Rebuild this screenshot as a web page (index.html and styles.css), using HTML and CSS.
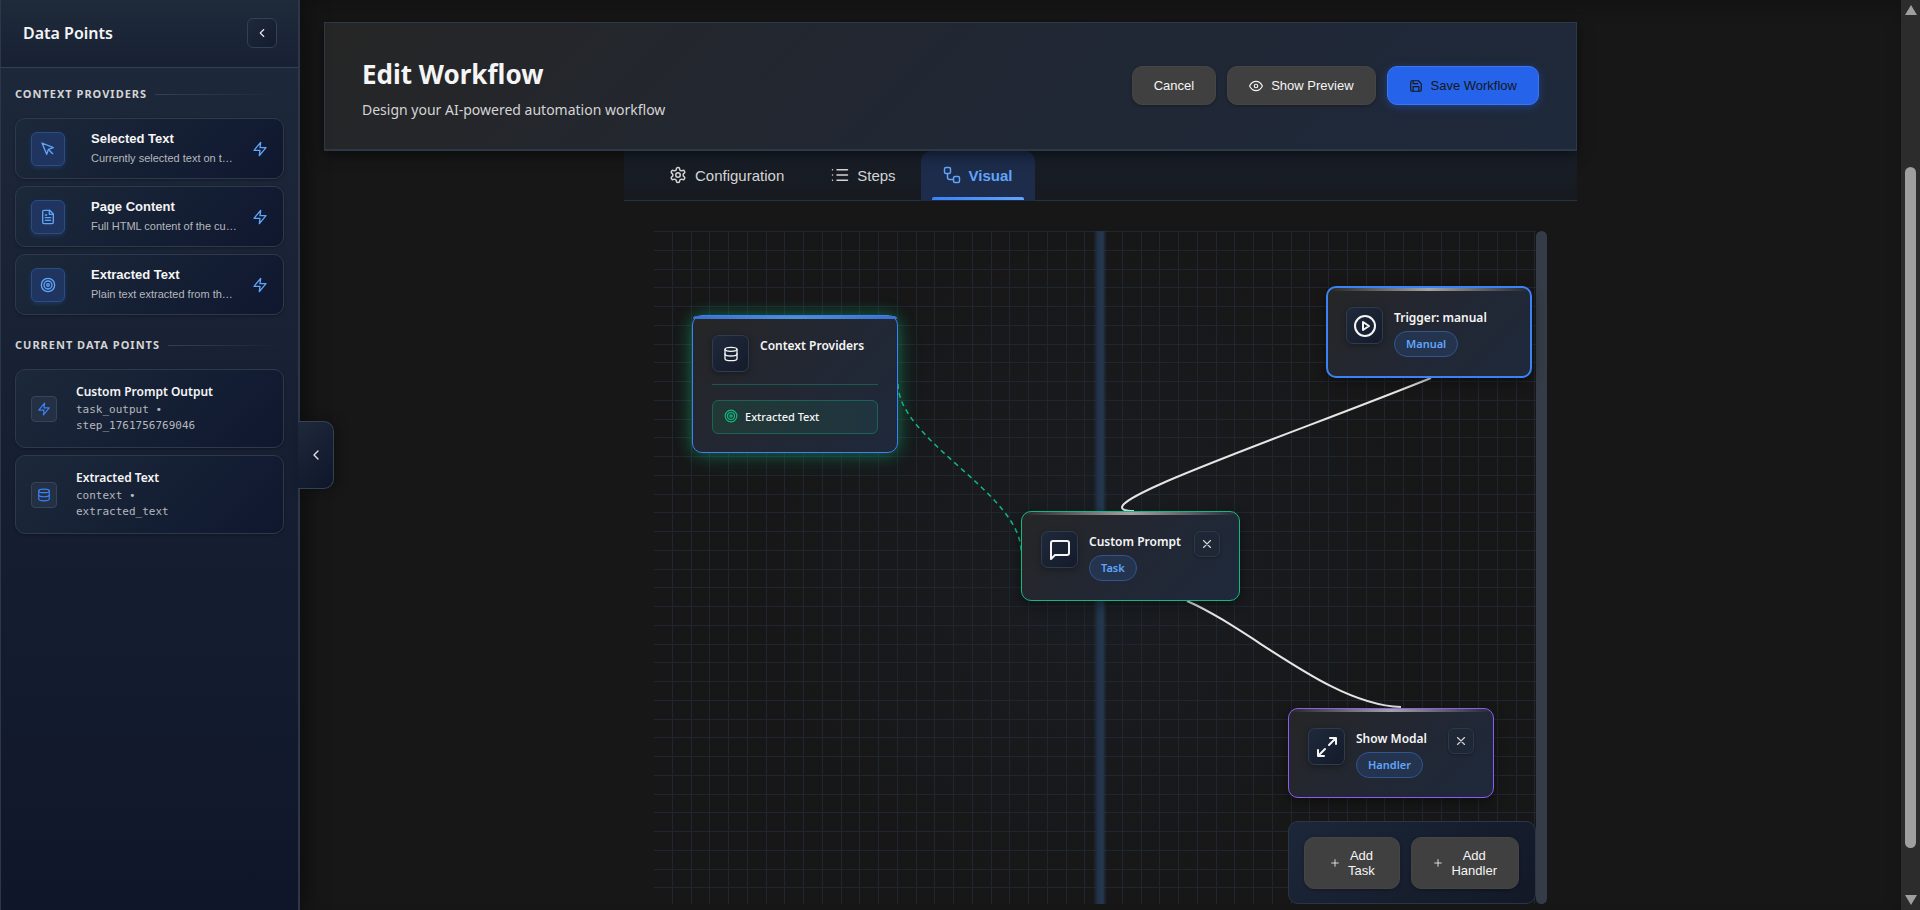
FILE: index.html
```
<!DOCTYPE html>
<html lang="en">
<head>
    <meta charset="UTF-8">
    <meta name="viewport" content="width=device-width, initial-scale=1.0">
    <title>Edit Workflow</title>
    <link rel="stylesheet" href="styles.css">
</head>
<body>
    <!-- Shared icon shapes -->
    <svg class="sprite" aria-hidden="true">
        <symbol id="i-left" viewBox="0 0 24 24"><path d="m15 18-6-6 6-6"/></symbol>
        <symbol id="i-zap" viewBox="0 0 24 24"><path d="M13 2 3 14h9l-1 8 10-12h-9l1-8z"/></symbol>
        <symbol id="i-cursor" viewBox="0 0 24 24"><path d="m3 3 7.07 16.97 2.51-7.39 7.39-2.51L3 3z"/><path d="m13 13 6 6"/></symbol>
        <symbol id="i-file" viewBox="0 0 24 24"><path d="M14.5 2H6a2 2 0 0 0-2 2v16a2 2 0 0 0 2 2h12a2 2 0 0 0 2-2V7.500z"/><path d="M14 2v6h6M16 13H8M16 17H8M10 9H8"/></symbol>
        <symbol id="i-target" viewBox="0 0 24 24"><circle cx="12" cy="12" r="10"/><circle cx="12" cy="12" r="6"/><circle cx="12" cy="12" r="2"/></symbol>
        <symbol id="i-db" viewBox="0 0 24 24"><ellipse cx="12" cy="5" rx="9" ry="3"/><path d="M21 12c0 1.660-4 3-9 3s-9-1.340-9-3"/><path d="M3 5v14c0 1.660 4 3 9 3s9-1.340 9-3V5"/></symbol>
        <symbol id="i-eye" viewBox="0 0 24 24"><path d="M1 12s4-8 11-8 11 8 11 8-4 8-11 8S1 12 1 12z"/><circle cx="12" cy="12" r="3"/></symbol>
        <symbol id="i-save" viewBox="0 0 24 24"><path d="M19 21H5a2 2 0 0 1-2-2V5a2 2 0 0 1 2-2h11l5 5v11a2 2 0 0 1-2 2z"/><path d="M17 21v-8H7v8M7 3v5h8"/></symbol>
        <symbol id="i-gear" viewBox="0 0 24 24"><path d="M12.220 2h-.44a2 2 0 0 0-2 2v.18a2 2 0 0 1-1 1.730l-.43.25a2 2 0 0 1-2 0l-.15-.08a2 2 0 0 0-2.730.73l-.22.38a2 2 0 0 0 .73 2.730l.15.1a2 2 0 0 1 1 1.720v.51a2 2 0 0 1-1 1.740l-.15.09a2 2 0 0 0-.73 2.730l.22.38a2 2 0 0 0 2.730.73l.15-.08a2 2 0 0 1 2 0l.43.25a2 2 0 0 1 1 1.730V20a2 2 0 0 0 2 2h.44a2 2 0 0 0 2-2v-.18a2 2 0 0 1 1-1.730l.43-.25a2 2 0 0 1 2 0l.15.08a2 2 0 0 0 2.730-.73l.22-.39a2 2 0 0 0-.73-2.730l-.15-.08a2 2 0 0 1-1-1.740v-.5a2 2 0 0 1 1-1.740l.15-.09a2 2 0 0 0 .73-2.730l-.22-.38a2 2 0 0 0-2.730-.73l-.15.08a2 2 0 0 1-2 0l-.43-.25a2 2 0 0 1-1-1.730V4a2 2 0 0 0-2-2z"/><circle cx="12" cy="12" r="3"/></symbol>
        <symbol id="i-list" viewBox="0 0 24 24"><path d="M8 5h14M8 12h14M8 19h14M2 5h.01M2 12h.01M2 19h.01"/></symbol>
        <symbol id="i-flow" viewBox="0 0 24 24"><rect x="2" y="2" width="8" height="8" rx="2"/><rect x="14" y="14" width="8" height="8" rx="2"/><path d="M6 10v5a3 3 0 0 0 3 3h5"/></symbol>
        <symbol id="i-play" viewBox="0 0 24 24"><circle cx="12" cy="12" r="10"/><path d="m10 8 6 4-6 4V8z"/></symbol>
        <symbol id="i-chat" viewBox="0 0 24 24"><path d="M21 15a2 2 0 0 1-2 2H7l-4 4V5a2 2 0 0 1 2-2h14a2 2 0 0 1 2 2z"/></symbol>
        <symbol id="i-expand" viewBox="0 0 24 24"><path d="M15 3h6v6M9 21H3v-6M21 3l-7 7M3 21l7-7"/></symbol>
        <symbol id="i-x" viewBox="0 0 24 24"><path d="M18 6 6 18M6 6l12 12"/></symbol>
        <symbol id="i-plus" viewBox="0 0 24 24"><path d="M12 4v16M4 12h16"/></symbol>
    </svg>

    <aside class="sidebar">
        <div class="sidebar-header">
            <h2>Data Points</h2>
            <button class="square-button" aria-label="Collapse panel"><svg class="icon s14"><use href="#i-left"/></svg></button>
        </div>
        <div class="sidebar-body">
            <section class="group">
                <h3 class="group-title">Context Providers</h3>
                <div class="point">
                    <span class="point-icon"><svg class="icon s16"><use href="#i-cursor"/></svg></span>
                    <div class="point-text">
                        <h4>Selected Text</h4>
                        <p>Currently selected text on the page</p>
                    </div>
                    <svg class="icon s16 bolt"><use href="#i-zap"/></svg>
                </div>
                <div class="point">
                    <span class="point-icon"><svg class="icon s16"><use href="#i-file"/></svg></span>
                    <div class="point-text">
                        <h4>Page Content</h4>
                        <p>Full HTML content of the current page</p>
                    </div>
                    <svg class="icon s16 bolt"><use href="#i-zap"/></svg>
                </div>
                <div class="point">
                    <span class="point-icon"><svg class="icon s16"><use href="#i-target"/></svg></span>
                    <div class="point-text">
                        <h4>Extracted Text</h4>
                        <p>Plain text extracted from the page</p>
                    </div>
                    <svg class="icon s16 bolt"><use href="#i-zap"/></svg>
                </div>
            </section>
            <section class="group">
                <h3 class="group-title">Current Data Points</h3>
                <div class="point output">
                    <span class="point-icon"><svg class="icon s14"><use href="#i-zap"/></svg></span>
                    <div class="point-text">
                        <h4>Custom Prompt Output</h4>
                        <p>task_output • step_1761756769046</p>
                    </div>
                </div>
                <div class="point output">
                    <span class="point-icon"><svg class="icon s14"><use href="#i-db"/></svg></span>
                    <div class="point-text">
                        <h4>Extracted Text</h4>
                        <p>context • extracted_text</p>
                    </div>
                </div>
            </section>
        </div>
        <button class="sidebar-tab" aria-label="Toggle sidebar"><svg class="icon s16"><use href="#i-left"/></svg></button>
    </aside>

    <main class="main">
        <header class="page-header">
            <div class="heading">
                <h1>Edit Workflow</h1>
                <p>Design your AI-powered automation workflow</p>
            </div>
            <div class="actions">
                <button class="button">Cancel</button>
                <button class="button"><svg class="icon s14"><use href="#i-eye"/></svg>Show Preview</button>
                <button class="button primary"><svg class="icon s14"><use href="#i-save"/></svg>Save Workflow</button>
            </div>
        </header>

        <div class="editor">
            <nav class="tabs">
                <button class="tab"><svg class="icon s18"><use href="#i-gear"/></svg>Configuration</button>
                <button class="tab"><svg class="icon s18"><use href="#i-list"/></svg>Steps</button>
                <button class="tab active"><svg class="icon s18"><use href="#i-flow"/></svg>Visual</button>
            </nav>

            <div class="canvas-wrap">
                <div class="canvas">
                    <svg class="grid">
                        <defs>
                            <pattern id="cells" width="75" height="75" patternUnits="userSpaceOnUse">
                                <path d="M18.500 0v75M37.500 0v75M55.500 0v75M74.500 0v75M0 .5h75M0 19.500h75M0 38.500h75M0 56.500h75"/>
                            </pattern>
                        </defs>
                        <rect width="100%" height="100%" fill="url(#cells)"/>
                    </svg>
                    <div class="center-line"></div>
                    <svg class="edges">
                        <path class="edge data" d="M244 153C244 209 367 263 367 320"/>
                        <path class="edge" d="M777 147C636 204 414 279 480 280"/>
                        <path class="edge" d="M533 370C596 397 676 474 747 476"/>
                    </svg>

                    <div class="node context">
                        <div class="node-head">
                            <span class="node-icon"><svg class="icon s16"><use href="#i-db"/></svg></span>
                            <div class="node-text"><h4>Context Providers</h4></div>
                        </div>
                        <div class="node-items">
                            <div class="node-item"><svg class="icon s14"><use href="#i-target"/></svg>Extracted Text</div>
                        </div>
                    </div>

                    <div class="node trigger">
                        <div class="node-head">
                            <span class="node-icon"><svg class="icon s24"><use href="#i-play"/></svg></span>
                            <div class="node-text"><h4>Trigger: manual</h4><span class="badge">Manual</span></div>
                        </div>
                    </div>

                    <div class="node task">
                        <div class="node-head">
                            <span class="node-icon"><svg class="icon s24"><use href="#i-chat"/></svg></span>
                            <div class="node-text"><h4>Custom Prompt</h4><span class="badge">Task</span></div>
                            <button class="node-close" aria-label="Remove task"><svg class="icon s14"><use href="#i-x"/></svg></button>
                        </div>
                    </div>

                    <div class="node handler">
                        <div class="node-head">
                            <span class="node-icon"><svg class="icon s24"><use href="#i-expand"/></svg></span>
                            <div class="node-text"><h4>Show Modal</h4><span class="badge">Handler</span></div>
                            <button class="node-close" aria-label="Remove handler"><svg class="icon s14"><use href="#i-x"/></svg></button>
                        </div>
                    </div>

                    <div class="toolbar">
                        <button class="button"><svg class="icon s10"><use href="#i-plus"/></svg><span>Add<br>Task</span></button>
                        <button class="button"><svg class="icon s10"><use href="#i-plus"/></svg><span>Add<br>Handler</span></button>
                    </div>
                </div>
                <div class="canvas-scroll"></div>
            </div>
        </div>
    </main>

    <div class="page-scroll">
        <span class="arrow up"></span>
        <span class="thumb"></span>
        <span class="arrow down"></span>
    </div>
</body>
</html>
```

FILE: styles.css
```
* {
    padding: 0;
    margin: 0;
    box-sizing: border-box;
}
body {
    display: flex;
    height: 100vh;
    overflow: hidden;
    background: #171717;
    color: #f5f5f5;
    font-family: "Noto Sans", sans-serif;
}
button {
    font-family: "Liberation Sans", Arial, sans-serif;
    cursor: pointer;
}
.sprite {
    position: absolute;
    width: 0;
    height: 0;
}

/* Icons */
.icon {
    flex: none;
    overflow: visible;
    fill: none;
    stroke: currentColor;
    stroke-width: 2;
    stroke-linecap: round;
    stroke-linejoin: round;
}
.s10 { width: 10px; height: 10px; }
.s14 { width: 14px; height: 14px; }
.s16 { width: 16px; height: 16px; }
.s18 { width: 18px; height: 18px; }
.s24 { width: 24px; height: 24px; }

/* Sidebar */
.sidebar {
    position: relative;
    z-index: 2;
    flex: none;
    width: 300px;
    border: 1px solid #2c3849;
    border-width: 0 2px 0 1px;
    background: linear-gradient(180deg, #1e293b 0%, #0f1629 100%);
    box-shadow: 4px 0 24px rgba(0,0,0,0.4);
}
.sidebar-header {
    display: flex;
    align-items: center;
    justify-content: space-between;
    height: 68px;
    padding: 0 21px 2px 22px;
    border-bottom: 1px solid #334155;
    background: linear-gradient(180deg, #1f2a3b, #172133);
}
.sidebar-header h2 {
    font-size: 16px;
    line-height: 24px;
    font-weight: 600;
}
.square-button {
    display: flex;
    align-items: center;
    justify-content: center;
    width: 30px;
    height: 30px;
    border: 1px solid #334155;
    border-radius: 6px;
    background: linear-gradient(135deg, #1e293b, #141c2f);
    color: #e5e5e5;
}
.sidebar-body {
    padding: 16px 14px;
}
.group {
    display: flex;
    flex-direction: column;
    gap: 7px;
    margin-bottom: 20px;
}
.group-title {
    display: flex;
    align-items: center;
    gap: 8px;
    margin-bottom: 7px;
    color: #d4d4d4;
    font-size: 11px;
    line-height: 20px;
    font-weight: 700;
    letter-spacing: 1px;
    text-transform: uppercase;
}
.group-title::after {
    content: "";
    flex: 1;
    height: 1px;
    background: linear-gradient(90deg, #334155, transparent);
}
.point {
    display: flex;
    align-items: center;
    height: 61px;
    padding: 0 15px;
    border: 1px solid #2e3a4b;
    border-radius: 10px;
    background: linear-gradient(135deg, #1c293a, #0f172f);
    box-shadow: 0 1px 3px rgba(0,0,0,0.3);
}
.point-icon {
    display: flex;
    align-items: center;
    justify-content: center;
    flex: none;
    width: 34px;
    height: 34px;
    border: 1px solid #2b4d86;
    border-radius: 6px;
    background: #1f355f;
    box-shadow: 0 2px 4px rgba(59,130,246,0.2);
    color: #60a5fa;
}
.point-text {
    flex: 1;
    min-width: 0;
    margin: 0 14px 0 26px;
    padding-bottom: 2px;
}
.point-text h4 {
    font: bold 13px/20px "Liberation Sans", Arial, sans-serif;
}
.point-text p {
    overflow: hidden;
    white-space: nowrap;
    text-overflow: ellipsis;
    color: #b5b8bd;
    font: 11px/18px "Liberation Sans", Arial, sans-serif;
}
.bolt {
    color: #60a5fa;
}
.output {
    height: 79px;
}
.output .point-icon {
    width: 26px;
    height: 26px;
    border-color: #36445a;
    border-radius: 4px;
    background: #243044;
    box-shadow: none;
    color: #3b82f6;
}
.output .point-text {
    margin: 0 40px 0 19px;
    padding-bottom: 2px;
}
.output h4 {
    font: 600 12px/20px "Noto Sans", sans-serif;
    white-space: nowrap;
}
.output p {
    white-space: normal;
    font: 11px/16px "DejaVu Sans Mono", monospace;
}
.sidebar-tab {
    position: absolute;
    top: 50%;
    left: 100%;
    width: 36px;
    height: 68px;
    margin-top: -34px;
    padding: 2px 0 0;
    border: 1px solid #334155;
    border-left: 0;
    border-radius: 0 10px 10px 0;
    background: linear-gradient(135deg, #1e293b, #0f1629);
    box-shadow: 4px 0 12px rgba(0,0,0,0.3);
    color: #e5e5e5;
}

/* Page header */
.main {
    flex: 1;
    display: flex;
    flex-direction: column;
    min-width: 0;
    padding: 22px 324px 6px 24px;
    box-shadow: inset 0 8px 16px rgba(0,0,0,0.2);
}
.page-header {
    position: relative;
    z-index: 1;
    display: flex;
    align-items: center;
    justify-content: space-between;
    padding: 26px 37px 27px;
    border: 1px solid #2e3947;
    border-bottom-width: 2px;
    background: linear-gradient(135deg, #262626, #212733 50%, #1e293b);
    box-shadow: 0 4px 12px rgba(0,0,0,0.5);
}
.heading {
    padding-top: 5px;
}
.heading h1 {
    font-size: 26px;
    line-height: 40px;
    font-weight: 700;
}
.heading p {
    margin-top: 4px;
    color: #d4d4d4;
    font-size: 14px;
    line-height: 24px;
}
.actions {
    display: flex;
    gap: 11px;
}
.button {
    display: flex;
    align-items: center;
    justify-content: center;
    gap: 8px;
    padding: 0 21px;
    height: 39px;
    border: 1px solid #454545;
    border-radius: 10px;
    background: #404040;
    box-shadow: 0 1px 3px rgba(0,0,0,0.3);
    color: #f5f5f5;
    font-size: 13px;
}
.button.primary {
    border-color: #3b76f6;
    background: #2563eb;
    box-shadow: 0 2px 8px rgba(37,99,235,0.4);
    color: #171717;
}

/* Tabs */
.editor {
    flex: 1;
    display: flex;
    flex-direction: column;
    margin-left: 300px;
}
.tabs {
    display: flex;
    gap: 3px;
    height: 50px;
    padding: 0 23px;
    border-bottom: 1px solid #263244;
    background: linear-gradient(180deg, #181e29, #171a1f);
}
.tab {
    position: relative;
    display: flex;
    align-items: center;
    gap: 8px;
    height: 50px;
    padding: 0 22px 2px;
    border: 0;
    border-radius: 10px 10px 0 0;
    background: none;
    color: #d4d4d4;
    font-size: 15px;
}
.tab.active {
    background: #1c2c4a;
    color: #60a5fa;
    font-weight: bold;
}
.tab.active::after {
    content: "";
    position: absolute;
    bottom: 1px;
    left: 11px;
    right: 11px;
    height: 3px;
    border-radius: 2px 2px 0 0;
    background: linear-gradient(90deg, #3b82f6, #60a5fa);
}

/* Canvas */
.canvas-wrap {
    flex: 1;
    display: flex;
    margin: 30px 30px 0;
}
.canvas {
    position: relative;
    flex: 1;
    background: radial-gradient(circle at 50% 50%, rgba(30,41,59,0.3), transparent 60%);
}
.canvas-scroll {
    width: 11px;
    border-radius: 6px;
    background: #353c47;
}
.grid, .edges {
    position: absolute;
    inset: 0;
    width: 100%;
    height: 100%;
}
.grid path {
    stroke: #1f2630;
}
.center-line {
    position: absolute;
    top: 0;
    bottom: 0;
    left: 439px;
    width: 14px;
    background: linear-gradient(90deg, transparent, #213349 35%, #25384f 65%, transparent);
}
.edge {
    fill: none;
    stroke: #e5e5e5;
    stroke-width: 2;
}
.edge.data {
    stroke: #10b981;
    stroke-width: 1.5;
    stroke-dasharray: 5 4;
}

/* Nodes */
.node {
    position: absolute;
    width: 206px;
    height: 90px;
    padding: 19px;
    border: 1px solid #3b82f6;
    border-radius: 10px;
    background: linear-gradient(135deg, #262626, #222733 50%, #1e293b);
    box-shadow: 0 4px 12px rgba(0,0,0,0.4);
}
.node::before {
    content: "";
    position: absolute;
    top: 0;
    left: 0;
    right: 0;
    height: 3px;
    border-radius: 9px 9px 0 0;
    background: linear-gradient(90deg, transparent, #a3a3a3, transparent);
}
.context {
    left: 38px;
    top: 84px;
    height: 138px;
    box-shadow: 0 0 16px rgba(16,185,129,0.4), 0 4px 24px rgba(16,185,129,0.2);
}
.context::before {
    background: linear-gradient(90deg, #3b6fd0, #4f8fd6, #3b6fd0);
}
.trigger {
    left: 672px;
    top: 55px;
    height: 92px;
    padding: 19px 18px;
    border-width: 2px;
}
.task {
    left: 367px;
    top: 280px;
    width: 219px;
    border-color: #10b981;
}
.handler {
    left: 634px;
    top: 477px;
    border-color: #8b5cf6;
}
.node-head {
    display: flex;
    align-items: flex-start;
}
.node-icon {
    display: flex;
    align-items: center;
    justify-content: center;
    flex: none;
    width: 37px;
    height: 37px;
    margin-right: 11px;
    border: 1px solid #303b4b;
    border-radius: 7px;
    background: linear-gradient(135deg, #1e293b, #141b2b);
    box-shadow: 0 2px 6px rgba(0,0,0,0.3);
}
.node-text {
    flex: 1;
}
.node-text h4 {
    font-size: 12px;
    line-height: 22px;
    font-weight: 600;
    white-space: nowrap;
}
.badge {
    display: inline-block;
    margin-top: 2px;
    padding: 0 11px;
    border: 1px solid #31558e;
    border-radius: 13px;
    background: #24344f;
    color: #60a5fa;
    font-size: 11px;
    line-height: 24px;
    font-weight: 600;
    vertical-align: top;
}
.node-close {
    display: flex;
    align-items: center;
    justify-content: center;
    width: 26px;
    height: 26px;
    border: 1px solid #2d3848;
    border-radius: 6px;
    background: #1e2736;
    box-shadow: 0 1px 3px rgba(0,0,0,0.3);
    color: #d4d4d4;
}
.node-items {
    margin-top: 12px;
    padding-top: 15px;
    border-top: 1px solid #1d5a4d;
}
.node-item {
    display: flex;
    align-items: center;
    gap: 7px;
    height: 34px;
    padding: 0 11px 2px;
    border: 1px solid #1d6355;
    border-radius: 6px;
    background: linear-gradient(90deg, #223835, #1f343f);
    font-size: 11px;
    font-weight: 500;
}
.node-item .icon {
    color: #10b981;
}
.toolbar {
    position: absolute;
    right: 0;
    bottom: 0;
    display: flex;
    gap: 11px;
    padding: 15px 16px 14px 15px;
    border: 1px solid #2a3648;
    border-radius: 10px;
    background: linear-gradient(135deg, #1c2739, #121826);
}
.toolbar .button {
    min-width: 96px;
    height: 52px;
    line-height: 15px;
}

/* Page scrollbar */
.page-scroll {
    flex: none;
    display: flex;
    flex-direction: column;
    align-items: center;
    width: 19px;
    padding: 5px 0;
    background: #2c2c2c;
}
.thumb {
    flex: 1;
    width: 11px;
    margin: 152px 0 47px;
    border-radius: 6px;
    background: #9f9f9f;
}
.arrow {
    border: 6px solid transparent;
}
.up {
    border-top: 0;
    border-bottom: 10px solid #9f9f9f;
}
.down {
    border-bottom: 0;
    border-top: 10px solid #9f9f9f;
}
```
